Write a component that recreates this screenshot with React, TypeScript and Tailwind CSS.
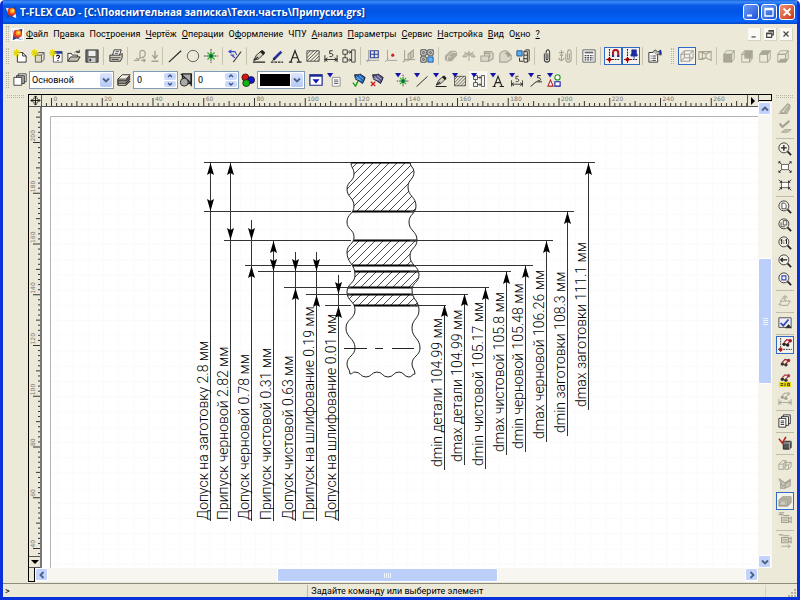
import type { ReactNode } from "react";
import clsx from "clsx";

const ink = "#222";
const dim = "#a5a294";

const star = (
  <path d="M4 0v9M0 4.500h8.500M1.200 1.700l5.600 5.600M6.800 1.700L1.200 7.300" stroke="#e3d800" strokeWidth="1.300" />
);
const funnel = <path d="M0 0h7L3.500 5z" fill="#1414a8" />;
const cube = (c: string, top = "none", front = "none", side = "none") => (
  <g stroke={c} strokeLinejoin="round">
    <path d="M2 6h9v9H2z" fill={front} />
    <path d="M2 6l3-4h9l-3 4z" fill={top} />
    <path d="M11 6l3-4v9l-3 4z" fill={side} />
  </g>
);
const lens = (inner: ReactNode) => (
  <>
    <path d="M10.500 10.500l4.500 4.500" stroke={ink} strokeWidth="2" />
    <circle cx="6.700" cy="6.700" r="5.700" fill="#f4f2e6" stroke="#333" />
    {inner}
  </>
);
const structure = (
  <path d="M1 1h5v5H1zM1 10h5v5H1zM6 3.500h4M6 12.500h4M11 1h4v14h-4zM8.500 2l2 1.500-2 1.500M8.500 11l2 1.500-2 1.500M3.500 6v4" stroke="#333" fill="none" />
);
const dimension = (
  <>
    <path d="M1 7v8M15 7v8M1 12h14M4 10l-3 2 3 2M12 10l3 2-3 2" stroke={ink} fill="none" />
    <path d="M10 2H6.500v3.200h2c2.200 0 2.200 3.500 0 3.500H6.300" stroke={ink} fill="none" />
  </>
);
const snap = (
  <>
    <path d="M4 0v14M1 12h15" stroke="#223" strokeWidth="1.200" strokeDasharray="2 1" />
    <circle cx="4" cy="12" r="2.300" fill="#d01818" />
    <path d="M0 12h8M4 9v7" stroke="#800" />
  </>
);
const crane = (c: string, d: string) => (
  <>
    <circle cx="5" cy="9" r="2" fill={c} />
    <circle cx="9" cy="10" r="2" fill={c} />
    <path d="M5 7l3-3 4 1-3 4" stroke={d} fill="none" strokeWidth="1.300" />
    <circle cx="12" cy="5" r="2" fill={d} />
  </>
);
const camera = (
  <g stroke={dim} fill="none" strokeWidth="1.200">
    <path d="M4 6h8v6H4zM12 8l3-2v6l-3-2M6 4h7" />
    <path d="M5 8h6M5 10h6M1 1h6M1 3h5" />
  </g>
);

const icons: Record<string, ReactNode> = {
  new: (
    <>
      <path d="M5 4h6l4 4v7H5z" fill="#fff" stroke={ink} />
      <path d="M11 4v4h4" stroke={ink} fill="none" />
      {star}
    </>
  ),
  new3d: (
    <>
      <path d="M5 7h7v8H5zM5 7l3-3h7l-3 3M12 15l3-3V4" fill="#ddd9c4" stroke="#555" />
      {star}
    </>
  ),
  newPrototype: (
    <>
      <path d="M5 3h10v12H5z" fill="#fff" stroke="#555" />
      <path d="M5 4h10" stroke="#2438a8" strokeWidth="3" />
      <path d="M8.500 8.500c0-2 3.500-2 3.500 0 0 1.500-1.800 1.200-1.800 2.800M10.200 12.500v1.300" stroke="#111" fill="none" strokeWidth="1.300" />
      {star}
    </>
  ),
  open: (
    <>
      <path d="M1 14V5h4l1 2h6v2" fill="#fff" stroke={ink} />
      <path d="M1 14l3-5h11l-3 5z" fill="#c4c1b0" stroke={ink} />
      <path d="M9 4c1-2 4-2 5 0M14 1v3h-3" stroke={ink} fill="none" />
    </>
  ),
  save: (
    <>
      <path d="M1 1h14v14H1z" fill="#6a6a66" stroke="#333" />
      <path d="M4 2h8v6H4z" fill="#eee" />
      <path d="M4 10h8v5H4z" fill="#ccc" />
      <path d="M5 11h2v3H5z" fill="#333" />
    </>
  ),
  print: (
    <>
      <path d="M4 7l2-6h8l-2 6" fill="#fff" stroke={ink} />
      <path d="M1 7h12l2-2v5l-2 4H1z" fill="#d3d0c2" stroke={ink} />
      <path d="M1 10h12M3 12h8M7.500 3h4M6.500 5h4" stroke="#444" />
    </>
  ),
  undo: <path d="M4 10c0 2 4 2 4 0V4c0-4 6-3 6 1 0 4-3 5-6 5M1 13h6M9 13h5M12 11l2 2-2 2" stroke={dim} fill="none" strokeWidth="1.400" />,
  down: <path d="M8 2v8M5 7l3 4 3-4M4 14h8" stroke={dim} fill="none" strokeWidth="1.600" />,
  line: <path d="M1 15L15 2" stroke={ink} strokeWidth="1.200" />,
  circle: <circle cx="8" cy="8" r="6.500" stroke="#555" fill="none" />,
  node: (
    <>
      <path d="M8 0v16M0 8h16" stroke="#222" strokeDasharray="2 1" />
      <path d="M4 4l8 8M12 4l-8 8M8 4v8M4 8h8" stroke="#26ad26" strokeWidth="1.300" />
      <circle cx="8" cy="8" r="2" fill="#064" />
    </>
  ),
  construct: (
    <>
      <path d="M6 15l9-12" stroke="#444" strokeWidth="1.300" />
      <path d="M1 3h7l2 4M4 1L1 3l3 2M5 8l3 2M3 7h4" stroke="#3847c8" fill="none" strokeWidth="1.200" />
    </>
  ),
  pen: (
    <>
      <path d="M2 13l3-6 6-5 3 3-6 6z" fill="#d8d5c4" stroke={ink} />
      <path d="M9 3l4 4 2-3-3-3z" fill={ink} />
      <path d="M2 13l5-4M1 15h14" stroke={ink} strokeWidth="1.300" />
    </>
  ),
  pencil: (
    <>
      <path d="M4 12l9-9" stroke="#23319d" strokeWidth="3" />
      <path d="M2 14l3-4 1 2z" fill={ink} />
      <path d="M1 15h14" stroke={ink} strokeDasharray="3 1" strokeWidth="1.300" />
    </>
  ),
  text: <path d="M1 15h4M10 15h5.500M3 15L8 2l5 13M5 10h6" stroke={ink} fill="none" strokeWidth="1.400" />,
  hatch: (
    <path d="M1 2h14v12H1zM1 6l4-4M1 10l8-8M1 14L13 2M5 14L15 4M9 14l6-6M13 14l2-2" stroke={ink} fill="none" strokeWidth=".8" />
  ),
  dimension,
  structure,
  grid: (
    <>
      <path d="M3 1v13M0 13h15M1 15l3-3" stroke="#999" />
      <path d="M5 2h9v8H5zM9.500 2v8M5 6h9" stroke="#2c3f9f" fill="none" strokeWidth="1.300" />
    </>
  ),
  axes: (
    <>
      <path d="M4 1v12h11M1 15l4-4" stroke="#999" fill="none" />
      <circle cx="10" cy="7" r="1.800" fill="#c22" />
    </>
  ),
  plane: <path d="M3 1v12M1 15l3-3h11M7 13V6l6-5v8zM10 4v6" stroke={dim} fill="#d2cfbf" strokeWidth="1.200" />,
  fragments: (
    <>
      <path d="M1 1h6v6H1zM9 1h6v6H9zM1 9h6v6H1z" stroke={ink} fill="#fff" />
      <path d="M3 3h2v2H3zM11 3h2v2h-2zM3 11h2v2H3z" stroke="#555" fill="#ccc" />
      <path d="M9 9h6v6H9z" stroke="#134c9e" fill="#63b6f5" />
    </>
  ),
  extrude: (
    <>
      <path d="M1 8l6-6h6l2 2v3l-6 7H3l-2-2z" fill="#b0ad9e" />
      <path d="M4 9l5-5h5M4 9v4M4 9h4" stroke="#dedbcc" fill="none" />
    </>
  ),
  revolve: <path d="M8 2v12M1 9c1-6 12-6 14 0h-4c-1-3-5-3-6 0zM5 6L3 3M11 6l2-3" stroke={dim} fill="#c8c5b6" />,
  boolean: <path d="M1 8h9v6H1zM5 8V3h8l2 2v6l-5 3M5 5h6v5" stroke={dim} fill="#dad7c8" strokeWidth="1.200" />,
  blend: (
    <>
      <path d="M2 6c2-4 6-5 9-3l4 4v5l-5 3H2z" fill="#dad7c8" stroke={dim} strokeWidth="1.200" />
      <path d="M7 5c3 0 4 3 4 5l4-3-4-4z" fill={dim} />
    </>
  ),
  assembly: (
    <>
      <path d="M1 2h6v6H1z" fill="#5cb0f0" stroke="#1c4b91" />
      <path d="M9 3h4v12H9zM9 7h4M9 11h4M13 15l2-2V1h-4L9 3M4 10v4h4" stroke={ink} fill="none" />
    </>
  ),
  clip: <path d="M5 5v7c0 4 6 4 6 0V4c0-4-4-4-4 0v7c0 1.500 2 1.500 2 0V5" stroke="#444" fill="none" strokeWidth="1.200" />,
  clips: (
    <path d="M9 5v7c0 4 6 4 6 0V4c0-4-4-4-4 0v7c0 1.500 2 1.500 2 0V5M4 1v8M1 4h6M2 7h4M1 10c0 4 6 4 6 0M4 9v5" stroke={dim} fill="none" strokeWidth="1.200" />
  ),
  calc: (
    <>
      <path d="M1 1h14v14H1z" fill="#fff" stroke="#555" />
      <path d="M3 4h10" stroke="#666" strokeWidth="2" />
      <path d="M3 7.500h10M3 10h10M3 12.500h10" stroke="#444" strokeWidth="1.500" strokeDasharray="2 1" />
    </>
  ),
  magnet: (
    <>
      {snap}
      <path d="M8 9V4c0-4 6-4 6 0v5" stroke="#b11b28" strokeWidth="2.400" fill="none" />
      <path d="M8 9V7M14 9V7" stroke="#1c2c9c" strokeWidth="2.400" />
    </>
  ),
  pin: (
    <>
      {snap}
      <path d="M9 1h5v5h1v2H8V6h1zM11.500 8v3" fill="#1c2c9c" stroke="#1c2c9c" />
    </>
  ),
  properties: (
    <>
      <path d="M1 4h10v11H1z" fill="#fff" stroke={ink} />
      <path d="M3 8h1M5 8h4M3 10.500h1M5 10.500h4M3 13h1M5 13h4" stroke={ink} />
      <path d="M5 4l3-3 3 2h4v4l-3-1-2 1" fill="#bbb" stroke="#333" />
      <path d="M14 1v5" stroke="#1c2c9c" strokeWidth="2" />
    </>
  ),
  wire: (
    <path d="M1 6h10v8H1zM1 6l4-4h10l-4 4M11 14l4-4V2M5 2v8h10M1 14l4-4" stroke={dim} fill="none" strokeWidth="1.200" />
  ),
  perspective: (
    <path d="M1 3h4v9H1zM5 4l4 2v4l-4 2M1 3l4 1M9 6l6-3v10l-6-3M5 3h10M1 12l8-2" stroke={dim} fill="none" strokeWidth="1.200" />
  ),
  viewFront: cube(dim, "none", "#aaa798"),
  viewBack: (
    <>
      <path d="M5 2h9v9H5z" fill="#aaa798" />
      {cube(dim)}
    </>
  ),
  viewTop: cube(dim, "#aaa798"),
  viewBottom: (
    <>
      <path d="M2 15l3-4h9l-3 4z" fill="#aaa798" />
      {cube(dim)}
    </>
  ),
  layer: (
    <g stroke="#333" fill="#fff">
      <path d="M6 1h9v9H6z" />
      <path d="M4 3h9v9H4z" fill="#aaa" />
      <path d="M1 5h9v9H1z" />
    </g>
  ),
  levels: (
    <g stroke={ink} fill="#f4f2e6">
      <path d="M1 14h9l5-5M1 11.500h9l5-5M1 9h9l5-5M1 7v7" fill="none" strokeWidth="1.300" />
      <path d="M1 7l5-5h9l-5 5z" />
    </g>
  ),
  priority: (
    <>
      <path d="M4 1h10v11H4z" stroke={ink} fill="#aaa" strokeWidth="1.500" />
      <path d="M2 1l12 11M14 1v14" stroke={ink} strokeWidth="1.500" />
      <circle cx="6" cy="10.500" r="4.500" fill="#aaa" stroke={ink} />
    </>
  ),
  color: (
    <g stroke="#111" strokeWidth=".8">
      <circle cx="5" cy="5" r="4" fill="#e01010" />
      <circle cx="11.500" cy="8" r="4" fill="#1515c8" />
      <circle cx="6" cy="11.500" r="4" fill="#12b312" />
    </g>
  ),
  filter: (
    <>
      <path d="M1 2h14v12H1z" fill="#fff" stroke="#1b2b8d" strokeWidth="1.400" />
      <path d="M1 3h14" stroke="#1b2b8d" strokeWidth="2.500" />
      <path d="M4 7h8l-4 5z" fill="#1414a8" />
    </>
  ),
  filterList: (
    <>
      <path d="M6 5h9v10H6z" fill="#fff" stroke="#888" />
      <path d="M8 8h5M8 10h5M8 12h5" stroke="#555" />
      {funnel}
    </>
  ),
  accept: (
    <>
      <path d="M3 2h5l1-1 6 4-1 3-2 4-4-3-4-2z" fill="#1d62b8" stroke="#112" />
      <path d="M5 4l6 5M8 3l5 4M4 6l5 2" stroke="#9cdcff" strokeWidth=".8" />
      <path d="M1 11l3 4 3-6" stroke="#18a018" fill="none" strokeWidth="1.600" />
    </>
  ),
  reject: (
    <>
      <path d="M3 2h5l1-1 6 4-1 3-2 4-4-3-4-2z" fill="#5a5590" stroke="#112" />
      <path d="M5 4l6 5M8 3l5 4M4 6l5 2" stroke="#ddd" strokeWidth=".8" />
      <path d="M1 10l5 5M6 10l-5 5" stroke="#d01515" strokeWidth="1.600" />
    </>
  ),
  palette: (
    <>
      {funnel}
      <path d="M1 15l3-7 3 7z" stroke="#b11c1c" fill="#fff" strokeWidth="1.200" />
      <circle cx="12" cy="5" r="3" stroke="#159015" fill="#fff" strokeWidth="1.200" />
      <path d="M9 10h6v5H9z" stroke="#1616a8" fill="#fff" strokeWidth="1.200" />
    </>
  ),
  leader: <path d="M1 15L8 9h8M14 1h-4v3h1.500c3 0 3 3.500 0 3.500H10" stroke={ink} fill="none" strokeWidth="1.200" />,
  edit: <path d="M1 13h9l4-7M3 11l8-9 3 2-8 9z" stroke={dim} fill="#c8c5b6" strokeWidth="1.200" />,
  done: (
    <>
      <path d="M2 4l3 4 8-7" stroke={dim} fill="none" strokeWidth="2.500" />
      <path d="M4 14l4-3h7l-4 3z" stroke={dim} fill="#c8c5b6" />
    </>
  ),
  zoomIn: lens(<path d="M3.500 6.700h6.500M6.700 3.500V10" stroke={ink} strokeWidth="1.500" />),
  zoomOut: (
    <>
      <path d="M4 5h8v6H4z" stroke="#555" fill="#fff" />
      <path d="M4 5L1 2M12 5l3-3M4 11l-3 3M12 11l3 3M1 4V2h2M13 2h2v2M1 12v2h2M15 12v2h-2" stroke={ink} fill="none" />
    </>
  ),
  zoomFit: (
    <>
      <path d="M4 5h8v6H4z" stroke="#555" fill="#fff" />
      <path d="M1 2l3 3M15 2l-3 3M1 14l3-3M15 14l-3-3M2 5h2V3M12 3v2h2M2 11h2v2M12 13v-2h2" stroke={ink} fill="none" />
    </>
  ),
  zoomPage: lens(<path d="M4.500 3.500h3l1.700 2V10H4.500z" fill="#fff" stroke="#444" />),
  zoomPages: lens(<path d="M6 3h4v5H6zM3.500 5v5H8" fill="none" stroke="#444" />),
  zoomActual: lens(<path d="M3 5l1.200-1v5M8.500 5l1.200-1v5M6.600 5v1M6.600 7.500v1" fill="none" stroke={ink} strokeWidth="1.200" />),
  zoomBack: lens(<path d="M3 6.700h7.500M5.500 4.500L3.200 6.700l2.300 2.200" fill="none" stroke={ink} strokeWidth="1.500" />),
  zoomWindow: lens(<path d="M4.500 4.500H9V9H4.500z" fill="#fff" stroke="#3545c8" strokeWidth="1.300" />),
  rotate: <path d="M1 12l4-4h9l-3 5H5zM8 8V2l-3 2M8 2l3 2M3 9C3 5 6 5 8 5" stroke={dim} fill="none" strokeWidth="1.100" />,
  model: (
    <>
      <path d="M1 2h14v11H1z" fill="#eceefb" stroke="#444" />
      <path d="M3 8l3 3 6-7" stroke="#3747b0" strokeWidth="2" fill="none" />
      <path d="M12 9l4 5H8z" fill="#333" />
    </>
  ),
  snapNodes: (
    <>
      <path d="M3 0v16M0 13h16" stroke={ink} strokeDasharray="2 1" />
      <circle cx="3" cy="13" r="2.200" fill="#c11c1c" />
      <g transform="translate(2 -2)">{crane("#222", "#a11a2a")}</g>
    </>
  ),
  nodes: crane("#333", "#9a2936"),
  nodesLabel: (
    <>
      <g transform="translate(0 -3)">{crane("#333", "#b03a46")}</g>
      <path d="M1 9h14v6H1z" fill="#eee000" />
      <path d="M3 11h3M3 13h3M8 10.500v3.500M11 10.500h2v3h-2z" stroke="#222" fill="none" />
    </>
  ),
  nodesDim: (
    <>
      <g transform="translate(0 -3)">{crane("#a5a294", "#bab7a8")}</g>
      <path d="M1 8v7M15 8v7M1 12h14M4 10l-3 2 3 2M12 10l3 2-3 2" stroke={dim} fill="none" />
    </>
  ),
  pages: (
    <g fill="#fff" stroke={ink}>
      <path d="M6 1h8v10H6z" />
      <path d="M4 3h8v10H4z" />
      <path d="M1 5h8v10H1z" />
      <path d="M3 8h4M3 10h4M3 12h4" />
    </g>
  ),
  regenerate: (
    <>
      <path d="M6 8l2-2h7v7l-2 2H6z" fill="#555" stroke={ink} />
      <path d="M6 8h7v7M13 8l2-2" stroke="#bbb" fill="none" />
      <path d="M1 3l4 5L9 1" stroke="#b02020" fill="none" strokeWidth="1.800" />
    </>
  ),
  wireframe: (
    <g stroke={dim} fill="none">
      <path d="M1 7l4-4h4v6l-3 4H1zM1 7h5v6M6 7l3-4M8 5h7v5l-3 3H8zM12 8v5M8 8h4l3-3" />
    </g>
  ),
  hidden: <path d="M1 3l7 5 6-4v7l-6 3H3V7M8 8v6M1 3l4 8M5 12l9-7" stroke={dim} fill="#cbc8b9" strokeWidth="1.200" />,
  shaded: (
    <>
      <path d="M1 7l4-4h10v7l-4 4H1z" fill="#b4b1a2" stroke={dim} />
      <path d="M1 7c3-2 8-1 10 0v7M2 8.500c3-1 6-1 7 0V13H2z" stroke="#99968a" fill="#cfccbd" />
    </>
  ),
  camera,
  cameraMove: (
    <>
      <g transform="translate(0 -2)">{camera}</g>
      <path d="M4 14h10M11 12l3 2-3 2" stroke={dim} fill="none" />
    </>
  ),
};

const filtered = (body: ReactNode) => (
  <>
    <g transform="translate(2 2) scale(.9)">{body}</g>
    {funnel}
  </>
);
icons.fNode = filtered(icons.node);
icons.fLine = filtered(icons.line);
icons.fPen = filtered(icons.pen);
icons.fHatch = filtered(icons.hatch);
icons.fStructure = filtered(structure);
icons.fText = filtered(icons.text);
icons.fDimension = filtered(dimension);
icons.fLeader = filtered(icons.leader);

function Icon({ name }: { name: string }) {
  return (
    <svg viewBox="0 0 16 16" className="size-[14px] shrink-0" fill="none" aria-hidden="true">
      {icons[name]}
    </svg>
  );
}

function Tool({ name, pressed, slim }: { name: string; pressed?: boolean; slim?: boolean }) {
  return (
    <button
      type="button"
      aria-label={name}
      aria-pressed={pressed}
      className={clsx(
        "flex h-[18px] shrink-0 items-center justify-center",
        slim ? "w-[11px]" : "w-[18px]",
        pressed && "border border-[#316ac5] bg-[#f3f2ec]",
        name === "fStructure" && "bg-[#f8f7f2]",
      )}
    >
      <Icon name={name} />
    </button>
  );
}

function Grip() {
  return <span className="mr-[2px] ml-[3px] h-4 w-[3px] shrink-0 border-x border-dotted border-[#b9b6a3]" />;
}

// "|" is a divider, "!" before a name means the button is held down
function Strip({ items, vertical }: { items: string[]; vertical?: boolean }) {
  return (
    <div className={clsx("flex items-center", vertical && "flex-col")}>
      {items.map((item, i) => {
        if (item === "|") {
          return vertical ? (
            <span key={i} className="my-px h-[2px] w-[18px] border-b border-[#bfbca9]" />
          ) : (
            <span key={i} className="mr-[3px] ml-[2px] h-[18px] w-px bg-[#c5c2b0]" />
          );
        }
        if (item === "grip") return <span key={i} className="mr-1 ml-[7px] h-4 w-[3px] border-x border-dotted border-[#b9b6a3]" />;
        const pressed = item.startsWith("!");
        const name = pressed ? item.slice(1) : item;
        return <Tool key={i} name={name} pressed={pressed} slim={name === "down"} />;
      })}
    </div>
  );
}

const mainTools =
  "new new3d newPrototype open save | print | undo down | line circle node | construct | pen pencil text hatch dimension structure | grid axes plane fragments | extrude revolve boolean blend assembly | clip clips | calc | !magnet !pin | properties grip !wire perspective | viewFront viewBack viewTop viewBottom".split(" ");

const sideTools =
  "edit done | zoomIn zoomOut zoomFit | zoomPage zoomPages zoomActual zoomBack zoomWindow | rotate | model | !snapNodes nodes nodesLabel nodesDim | pages | regenerate | wireframe hidden !shaded camera | cameraMove".split(" ");

// label and index of the underlined letter
const menu: [string, number][] = [
  ["Файл", 0],
  ["Правка", 1],
  ["Построения", 3],
  ["Чертёж", 0],
  ["Операции", 0],
  ["Оформление", 1],
  ["ЧПУ", -1],
  ["Анализ", 0],
  ["Параметры", 0],
  ["Сервис", 0],
  ["Настройка", 0],
  ["Вид", 0],
  ["Окно", 1],
  ["?", 0],
];

function Logo() {
  return (
    <svg viewBox="0 0 16 16" className="size-[13px] shrink-0" aria-hidden="true">
      <path d="M1 2l5 1 8-2-1 8 1 6-7-2-5 2 1-7z" fill="#2a3f9c" />
      <path d="M1 2l5 1-3 5zM14 15l-5-2 4-4z" fill="#e9edf8" />
      <circle cx="8" cy="7" r="5" fill="#e2341c" />
      <circle cx="9" cy="6" r="3.200" fill="#fb9a1c" />
      <circle cx="9.500" cy="5.500" r="1.500" fill="#ffe45a" />
    </svg>
  );
}

function TitleBar() {
  return (
    <header className="flex h-6 shrink-0 items-center gap-[2px] pr-[2px] pl-[2px] [background-image:linear-gradient(#1c62e0_0,#3a8cf8_8%,#0a5ae6_22%,#0055e5_50%,#0564fa_88%,#0347c4_100%)]">
      <Logo />
      <h1 className="pb-px font-[Open_Sans] text-[10px] leading-4 font-bold text-white [text-shadow:1px_1px_1px_#0a2a80]">
        T-FLEX CAD - [C:\Пояснительная записка\Техн.часть\Припуски.grs]
      </h1>
      <div className="ml-auto flex gap-[2px]">
        <button type="button" aria-label="Свернуть" className="flex size-4 items-center justify-center rounded-[3px] border border-white bg-linear-to-br from-[#6f9bf5] to-[#1c4fd8]">
          <svg viewBox="0 0 12 12" className="size-3"><path d="M2 9.500h5" stroke="#fff" strokeWidth="2" /></svg>
        </button>
        <button type="button" aria-label="Развернуть" className="flex size-4 items-center justify-center rounded-[3px] border border-white bg-linear-to-br from-[#6f9bf5] to-[#1c4fd8]">
          <svg viewBox="0 0 12 12" className="size-3"><path d="M2 2.500h8v7.500H2zM2 3.500h8" stroke="#fff" strokeWidth="1.300" fill="none" /></svg>
        </button>
        <button type="button" aria-label="Закрыть" className="flex size-4 items-center justify-center rounded-[3px] border border-white bg-linear-to-br from-[#f09070] to-[#c8320c]">
          <svg viewBox="0 0 12 12" className="size-3"><path d="M2.500 2.500l7 7M9.500 2.500l-7 7" stroke="#fff" strokeWidth="1.800" /></svg>
        </button>
      </div>
    </header>
  );
}

function MenuBar() {
  return (
    <nav className="flex h-5 shrink-0 items-center pr-1">
      <Grip />
      <span className="mr-[2px] flex size-[13px] items-center justify-center bg-white">
        <Logo />
      </span>
      <div className="flex gap-[5px]">
        {menu.map(([label, u]) => (
          <button key={label} type="button" className="leading-4">
            {label.slice(0, Math.max(u, 0))}
            {u >= 0 && <u className="underline-offset-1">{label[u]}</u>}
            {label.slice(u + 1)}
          </button>
        ))}
      </div>
      <div className="ml-auto flex gap-[3px]">
        {["M3 9.500h5", "M4 2h6v5H8M4 2.500h6M2 5h6v5H2zM2 5.500h6", "M3 3l6 6M9 3l-6 6"].map((d) => (
          <button key={d} type="button" aria-label="Окно документа" className="flex h-[13px] w-[13px] items-center justify-center border-r border-b border-[#d5d2c2] bg-[#faf9f4]">
            <svg viewBox="0 0 12 12" className="size-[10px]"><path d={d} stroke="#444" strokeWidth="1.400" fill="none" /></svg>
          </button>
        ))}
      </div>
    </nav>
  );
}

function Spinner({ label }: { label: string }) {
  return (
    <div className="flex h-[18px] w-[45px] border border-[#7f9db9] bg-white p-px">
      <input aria-label={label} defaultValue="0" className="h-[14px] w-0 flex-1 pl-[2px] leading-[14px] outline-none" />
      <span className="flex w-3 flex-col gap-px">
        {["M1 4l2-2 2 2", "M1 2l2 2 2-2"].map((d) => (
          <button key={d} type="button" aria-label={label} className="flex flex-1 items-center justify-center rounded-[2px] bg-[#cbdafc]">
            <svg viewBox="0 0 6 6" className="size-[6px]"><path d={d} stroke="#3a5580" strokeWidth="1.400" fill="none" /></svg>
          </button>
        ))}
      </span>
    </div>
  );
}

function Arrow() {
  return (
    <span className="pointer-events-none absolute inset-y-px right-px flex w-3 items-center justify-center rounded-[2px] bg-linear-to-b from-[#dce6fe] to-[#b4c8f6]">
      <svg viewBox="0 0 8 8" className="size-2"><path d="M1 2.500l3 3 3-3" stroke="#4d6185" strokeWidth="1.800" fill="none" /></svg>
    </span>
  );
}

function PropertyBar() {
  return (
    <div className="flex h-[25px] shrink-0 items-center pb-px">
      <Grip />
      <span className="flex w-[18px] justify-center"><Icon name="layer" /></span>
      <div className="relative h-[18px] w-[85px] border border-[#7f9db9] bg-white">
        <select aria-label="Слой" className="block h-4 w-full appearance-none pl-[2px] leading-4 outline-none">
          <option>Основной</option>
        </select>
        <Arrow />
      </div>
      <span className="flex w-[19px] justify-center"><Icon name="levels" /></span>
      <Spinner label="Уровень" />
      <span className="flex w-4 justify-center"><Icon name="priority" /></span>
      <Spinner label="Приоритет" />
      <span className="flex w-[18px] justify-center"><Icon name="color" /></span>
      <div className="relative h-[18px] w-12 border border-[#7f9db9] bg-white">
        <select aria-label="Цвет" className="m-[2px] block h-3 w-[30px] appearance-none bg-black text-black outline-none">
          <option aria-label="Чёрный" />
        </select>
        <Arrow />
      </div>
      <div className="ml-[2px] flex">
        <Tool name="filter" />
        <Tool name="filterList" />
      </div>
      <div className="ml-[7px] flex">
        <Tool name="accept" />
        <Tool name="reject" />
      </div>
      <div className="ml-[7px] flex gap-px">
        {["fNode", "fLine", "fPen", "fHatch", "fStructure", "fText", "fDimension", "fLeader", "palette"].map((n) => (
          <Tool key={n} name={n} />
        ))}
      </div>
    </div>
  );
}

const STEP = 5.075;

function TopRuler() {
  return (
    <svg className="h-full min-w-0 flex-1 font-[DejaVu_Sans]" aria-hidden="true">
      {Array.from({ length: 400 }, (_, i) => {
        const n = i - 1;
        const x = 9.5 + n * STEP;
        const h = n % 10 === 0 ? 8 : n % 5 === 0 ? 5 : 3;
        return (
          <g key={i}>
            <path d={`M${x} 11v${-h}`} stroke="#333" />
            {n % 10 === 0 && n < 138 && <text x={x + 2} y="6" fontSize="6" fill="#777">{n * 2}</text>}
          </g>
        );
      })}
    </svg>
  );
}

function SideRuler() {
  return (
    <svg className="min-h-0 w-full flex-1 font-[DejaVu_Sans]" aria-hidden="true">
      {Array.from({ length: 200 }, (_, i) => {
        const n = i - 6;
        const y = 35.5 + n * STEP;
        const h = n % 10 === 0 ? 7 : n % 5 === 0 ? 4 : 2;
        return (
          <g key={i}>
            <path d={`M11 ${y}h${-h}`} stroke="#333" />
            {n % 10 === 0 && n < 82 && (
              <text transform={`translate(6 ${y - 1}) rotate(-90)`} fontSize="6" fill="#777">{200 - n * 2}</text>
            )}
          </g>
        );
      })}
    </svg>
  );
}

type Point = [number, number];

// wavy break line through the given turning points
function wave(points: Point[], across = false) {
  return points
    .slice(1)
    .map(([x, y], i) => {
      const [px, py] = points[i];
      const mx = (px + x) / 2;
      const my = (py + y) / 2;
      return across ? `C${mx} ${py} ${mx} ${y} ${x} ${y}` : `C${px} ${my} ${x} ${my} ${x} ${y}`;
    })
    .join("");
}

const leftEdge: Point[] = [[351, 162], [354, 174], [347, 189], [354, 206], [347, 222], [354, 237], [347, 252], [355, 275], [347, 292], [355, 310], [346, 328], [355, 348], [347, 364], [350, 374]];
const rightEdge: Point[] = [[410, 162], [414, 172], [408, 187], [416, 206], [409, 222], [417, 240], [410, 256], [419, 275], [412, 290], [419, 310], [412, 328], [420, 348], [412, 364], [415, 374]];
const bottomEdge: Point[] = [[350, 374], [355, 372], [366, 377], [377, 372], [388, 377], [399, 372], [409, 377], [415, 374]];

const levels = [
  { y: 162.5, x1: 204, x2: 595 },
  { y: 211.5, x1: 204, x2: 574 },
  { y: 240.5, x1: 224, x2: 553 },
  { y: 265.5, x1: 245, x2: 533 },
  { y: 271.5, x1: 258, x2: 511 },
  { y: 287.5, x1: 284, x2: 489 },
  { y: 294.5, x1: 306, x2: 468 },
  { y: 305.5, x1: 325, x2: 446 },
];

const allowances = [
  { x: 210.5, top: 163, up: 163, down: 211, text: "Допуск на заготовку 2.8 мм" },
  { x: 230.5, top: 163, up: 163, down: 240, text: "Припуск черновой 2.82 мм" },
  { x: 251.5, top: 220, up: 266, down: 240, text: "Допуск черновой 0.78 мм" },
  { x: 273.5, top: 241, up: 241, down: 271, text: "Припуск чистовой 0.31 мм" },
  { x: 295.5, top: 252, up: 288, down: 271, text: "Допуск чистовой 0.63 мм" },
  { x: 316.5, top: 252, up: 295, down: 271, text: "Припуск на шлифование 0.19 мм" },
  { x: 338.5, top: 275, up: 306, down: 294, text: "Допуск на шлифование 0.01 мм" },
];

const diameters = [
  { x: 444.5, top: 305, bottom: 470, text: "dmin детали 104.99 мм" },
  { x: 464.5, top: 294, bottom: 465, text: "dmax детали 104.99 мм" },
  { x: 485.5, top: 288, bottom: 469, text: "dmin чистовой 105.17 мм" },
  { x: 506.5, top: 272, bottom: 455, text: "dmax чистовой 105.8 мм" },
  { x: 525.5, top: 266, bottom: 452, text: "dmin черновой 105.48 мм" },
  { x: 546.5, top: 241, bottom: 442, text: "dmax черновой 106.26 мм" },
  { x: 567.5, top: 212, bottom: 436, text: "dmin заготовки 108.3 мм" },
  { x: 588.5, top: 163, bottom: 410, text: "dmax заготовки 111.1 мм" },
];

const upArrow = (x: number, y: number) => `M${x} ${y}l3.500 12-3.500-2-3.500 2z`;
const downArrow = (x: number, y: number) => `M${x} ${y}l3.500-12-3.500 2-3.500-2z`;

function Drawing() {
  const left = `M351 162${wave(leftEdge)}`;
  const right = `M410 162${wave(rightEdge)}`;
  const body = `${left}L415 374${wave([...rightEdge].reverse())}z`;
  return (
    <svg className="block size-full font-[Roboto] font-light" role="img" aria-label="Припуски">
      <defs>
        <pattern id="mesh" width="15.225" height="15.225" patternUnits="userSpaceOnUse">
          <path d="M.5 0v16M0 .5h16" stroke="#fafafa" />
        </pattern>
        <pattern id="hatching" width="8" height="8" patternUnits="userSpaceOnUse">
          <path d="M-1 9L9-1M-1 1l2-2M7 9l2-2" stroke="#333" strokeWidth=".9" />
        </pattern>
        <clipPath id="part">
          <path d={body} />
        </clipPath>
      </defs>
      <rect x="9" y="9" width="100%" height="100%" fill="url(#mesh)" />
      <path d="M8.500 2000V9.500H3000" stroke="#b4b4b4" fill="none" />
      <g transform="translate(-42 -107)">
        <g clipPath="url(#part)">
          {[[163, 49], [240, 25], [271, 17], [294, 11]].map(([y, h]) => (
            <rect key={y} x="340" y={y} width="85" height={h} fill="url(#hatching)" />
          ))}
          {levels.map(({ y }) => (
            <path key={y} d={`M340 ${y}h85`} stroke="#000" strokeWidth="2" />
          ))}
        </g>
        <path d={`${left}M350 374${wave(bottomEdge, true)}${right}`} fill="none" stroke="#222" strokeWidth="1" />
        <path d="M344 348.500h23M375 348.500h8M392 348.500h22" stroke="#222" />
        {levels.map(({ y, x1, x2 }) => (
          <path key={y} d={`M${x1} ${y}H351M410 ${y}H${x2}`} stroke="#333" />
        ))}
        {allowances.map(({ x, top, up, down, text }) => (
          <g key={text}>
            <path d={`M${x} ${top}V521`} stroke="#333" />
            <path d={upArrow(x, up) + downArrow(x, down)} fill="#000" />
            <text transform={`translate(${x - 3} 520) rotate(-90)`} fontSize="14">{text}</text>
          </g>
        ))}
        {diameters.map(({ x, top, bottom, text }) => (
          <g key={text}>
            <path d={`M${x} ${top}V${bottom}`} stroke="#333" />
            <path d={upArrow(x, top)} fill="#000" />
            <text transform={`translate(${x - 3} ${bottom - 3}) rotate(-90)`} fontSize="14">{text}</text>
          </g>
        ))}
      </g>
    </svg>
  );
}

function ScrollButton({ d, label }: { d: string; label: string }) {
  return (
    <button type="button" aria-label={label} className="flex size-[13px] shrink-0 items-center justify-center rounded-[2px] border border-white bg-[#c3d3fd]">
      <svg viewBox="0 0 8 8" className="size-2"><path d={d} stroke="#4d6185" strokeWidth="1.800" fill="none" /></svg>
    </button>
  );
}

export default function App() {
  return (
    <div className="flex h-screen w-full flex-col overflow-hidden rounded-t-[5px] border-x-[3px] border-b-[3px] border-[#0831d9] bg-[#ece9d8] font-[Roboto,sans-serif] text-[9px] text-black">
      <TitleBar />
      <MenuBar />
      <div className="flex h-6 shrink-0 items-center">
        <Grip />
        <Strip items={mainTools} />
      </div>
      <PropertyBar />

      <main className="flex min-h-0 flex-1">
        <aside className="w-[25px] shrink-0 pt-[2px]">
          <div className="mx-1 h-[3px] border-y border-dotted border-[#b9b6a3]" />
        </aside>

        <div className="mt-px flex min-w-0 flex-1 flex-col border-t border-l border-black">
          <div className="flex h-3 shrink-0 border-b border-[#555]">
            <button type="button" aria-label="Начало координат" className="flex w-[13px] shrink-0 items-center justify-center border-r border-[#555]">
              <svg viewBox="0 0 12 12" className="size-[11px]">
                <path d="M6 1v10M1 6h10M4.500 2.500L6 1l1.500 1.500M4.500 9.500L6 11l1.500-1.500M2.500 4.500L1 6l1.500 1.500M9.500 4.500L11 6 9.500 7.500" stroke="#111" fill="none" />
                <circle cx="6" cy="6" r="3" stroke="#111" fill="none" strokeWidth=".7" />
              </svg>
            </button>
            <TopRuler />
            <button type="button" aria-label="Вправо" className="flex w-3 shrink-0 items-center justify-center border-x border-[#555]">
              <svg viewBox="0 0 8 8" className="size-2"><path d="M2 0l4 4-4 4z" /></svg>
            </button>
            <div className="h-[6px] w-[13px] shrink-0 border-r border-b border-black" />
          </div>

          <div className="flex min-h-0 flex-1">
            <div className="flex w-[13px] shrink-0 flex-col border-r-2 border-[#777]">
              <SideRuler />
              <button type="button" aria-label="Вниз" className="flex h-3 shrink-0 items-center justify-center border-y border-[#555]">
                <svg viewBox="0 0 8 8" className="size-2"><path d="M0 2h8L4 6z" /></svg>
              </button>
            </div>
            <div className="min-w-0 flex-1 bg-white">
              <Drawing />
            </div>
            <div className="-mt-[5px] flex w-[14px] shrink-0 flex-col bg-[#f7f6f1]">
              <ScrollButton d="M1 5.500l3-3 3 3" label="Прокрутить вверх" />
              <div className="flex-[143]" />
              <div className="flex flex-[125] flex-col items-center justify-center gap-px rounded-[2px] border border-white bg-[#bccffb]">
                {[0, 1, 2, 3].map((n) => <i key={n} className="h-px w-[5px] bg-[#eef4fe]" />)}
              </div>
              <div className="flex-[171]" />
              <ScrollButton d="M1 2.500l3 3 3-3" label="Прокрутить вниз" />
            </div>
          </div>

          <div className="flex h-[14px] shrink-0 bg-[#f7f6f1]">
            <div className="w-[6px] shrink-0 border-r border-b border-black bg-[#ece9d8]" />
            <ScrollButton d="M5.500 1l-3 3 3 3" label="Прокрутить влево" />
            <div className="flex-[230]" />
            <div className="flex flex-[220] items-center justify-center gap-px rounded-[2px] border border-white bg-[#bccffb]">
              {[0, 1, 2, 3].map((n) => <i key={n} className="h-[5px] w-px bg-[#eef4fe]" />)}
            </div>
            <div className="flex-[248]" />
            <ScrollButton d="M2.500 1l3 3-3 3" label="Прокрутить вправо" />
            <div className="w-[14px] shrink-0 bg-[#ece9d8]" />
          </div>
        </div>

        <aside className="w-[25px] shrink-0 pt-[2px]">
          <div className="mx-1 mb-[2px] h-[3px] border-y border-dotted border-[#b9b6a3]" />
          <Strip items={sideTools} vertical />
        </aside>
      </main>

      <footer className="mt-px flex h-[14px] shrink-0 items-center border-t border-[#8d8b7e] leading-3">
        <span className="flex-[305] pl-[2px]">&gt;</span>
        <span className="flex-[458] border-l border-[#bbb8a6] pl-[3px]">Задайте команду или выберите элемент</span>
        <span className="flex h-3 flex-[31] items-end justify-end border-l border-[#d5d2c2]">
          <svg viewBox="0 0 10 10" className="size-[10px]"><path d="M8 2v8M5 5v5M2 8v2" stroke="#b3b09c" strokeWidth="2" strokeDasharray="2 1" /></svg>
        </span>
      </footer>
    </div>
  );
}
